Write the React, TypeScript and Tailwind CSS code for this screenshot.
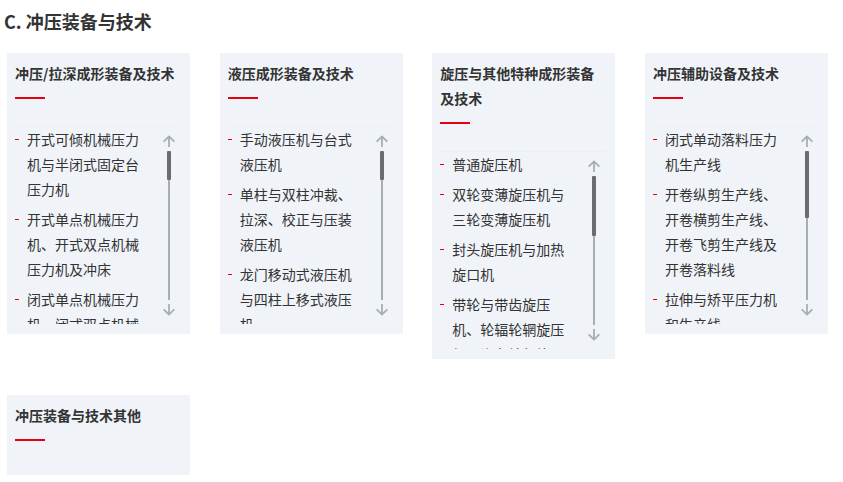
import React from "react";

type CardData = {
  title: string;
  items?: string[];
  thumb?: string;
};

const cards: CardData[] = [
  {
    title: "冲压/拉深成形装备及技术",
    items: [
      "开式可倾机械压力机与半闭式固定台压力机",
      "开式单点机械压力机、开式双点机械压力机及冲床",
      "闭式单点机械压力机、闭式双点机械压力机",
    ],
    thumb: "h-[29px]",
  },
  {
    title: "液压成形装备及技术",
    items: [
      "手动液压机与台式液压机",
      "单柱与双柱冲裁、拉深、校正与压装液压机",
      "龙门移动式液压机与四柱上移式液压机",
    ],
    thumb: "h-[29px]",
  },
  {
    title: "旋压与其他特种成形装备及技术",
    items: [
      "普通旋压机",
      "双轮变薄旋压机与三轮变薄旋压机",
      "封头旋压机与加热旋口机",
      "带轮与带齿旋压机、轮辐轮辋旋压机及汽车轮毂旋压",
    ],
    thumb: "h-[60px]",
  },
  {
    title: "冲压辅助设备及技术",
    items: [
      "闭式单动落料压力机生产线",
      "开卷纵剪生产线、开卷横剪生产线、开卷飞剪生产线及开卷落料线",
      "拉伸与矫平压力机和生产线",
    ],
    thumb: "h-[67px]",
  },
  {
    title: "冲压装备与技术其他",
  },
];

function Arrow({ down }: { down?: boolean }) {
  return (
    <svg
      width="12"
      height="12"
      viewBox="0 0 12 12"
      className={down ? "rotate-180 block" : "block"}
    >
      <path
        d="M6 11.5V1.5M1.2 6.2L6 1.4L10.8 6.2"
        stroke="#a9adb4"
        strokeWidth="1.8"
        fill="none"
        strokeLinecap="round"
        strokeLinejoin="round"
      />
    </svg>
  );
}

function Scrollbar({ thumb }: { thumb: string }) {
  return (
    <div className="ml-auto mr-[7px] flex w-[12px] flex-col items-center pt-[8px]">
      <Arrow />
      <div className="relative mt-[4px] h-[149px] w-[2px] bg-[#a9adb4]">
        <div
          className={`absolute left-[-1px] top-0 w-[4px] rounded-[1px] bg-[#6b6c6f] ${thumb}`}
        />
      </div>
      <div className="mt-[4px]">
        <Arrow down />
      </div>
    </div>
  );
}

function Card({ data }: { data: CardData }) {
  return (
    <div className="bg-[#f0f4f9] px-[8px] pt-[8px] pb-[10px]">
      <h3 className="text-[14px] font-bold leading-[25px] text-[#333]">
        {data.title}
      </h3>
      <div className="mt-[11px] h-[2px] w-[30px] bg-[#e60012]" />
      {data.items ? (
        <div className="mt-[27px] flex h-[198px] border-t border-[#ecf0f5]">
          <ul className="w-[130px] overflow-hidden">
            {data.items.map((it, i) => (
              <li
                key={i}
                className="relative mb-[5px] pl-[12px] text-[14px] leading-[25px] text-[#333]"
              >
                <span className="absolute left-0 top-[12px] h-[1px] w-[4px] bg-[#e60012]" />
                {it}
              </li>
            ))}
          </ul>
          <Scrollbar thumb={data.thumb ?? "h-[29px]"} />
        </div>
      ) : (
        <div className="h-[24px]" />
      )}
    </div>
  );
}

export default function App() {
  return (
    <div
      className="min-h-[482px] w-[843px] bg-white"
      style={{
        fontFamily:
          '"Noto Sans CJK SC", "Noto Sans", "Liberation Sans", sans-serif',
      }}
    >
      <h2 className="mt-[8px] mb-[19px] pl-[4px] text-[18px] font-bold leading-[26px] text-[#333]">
        C. 冲压装备与技术
      </h2>
      <div className="grid grid-cols-[repeat(4,183px)] items-start gap-x-[29.67px] gap-y-[36px] pl-[7px]">
        {cards.map((c, i) => (
          <Card key={i} data={c} />
        ))}
      </div>
    </div>
  );
}
